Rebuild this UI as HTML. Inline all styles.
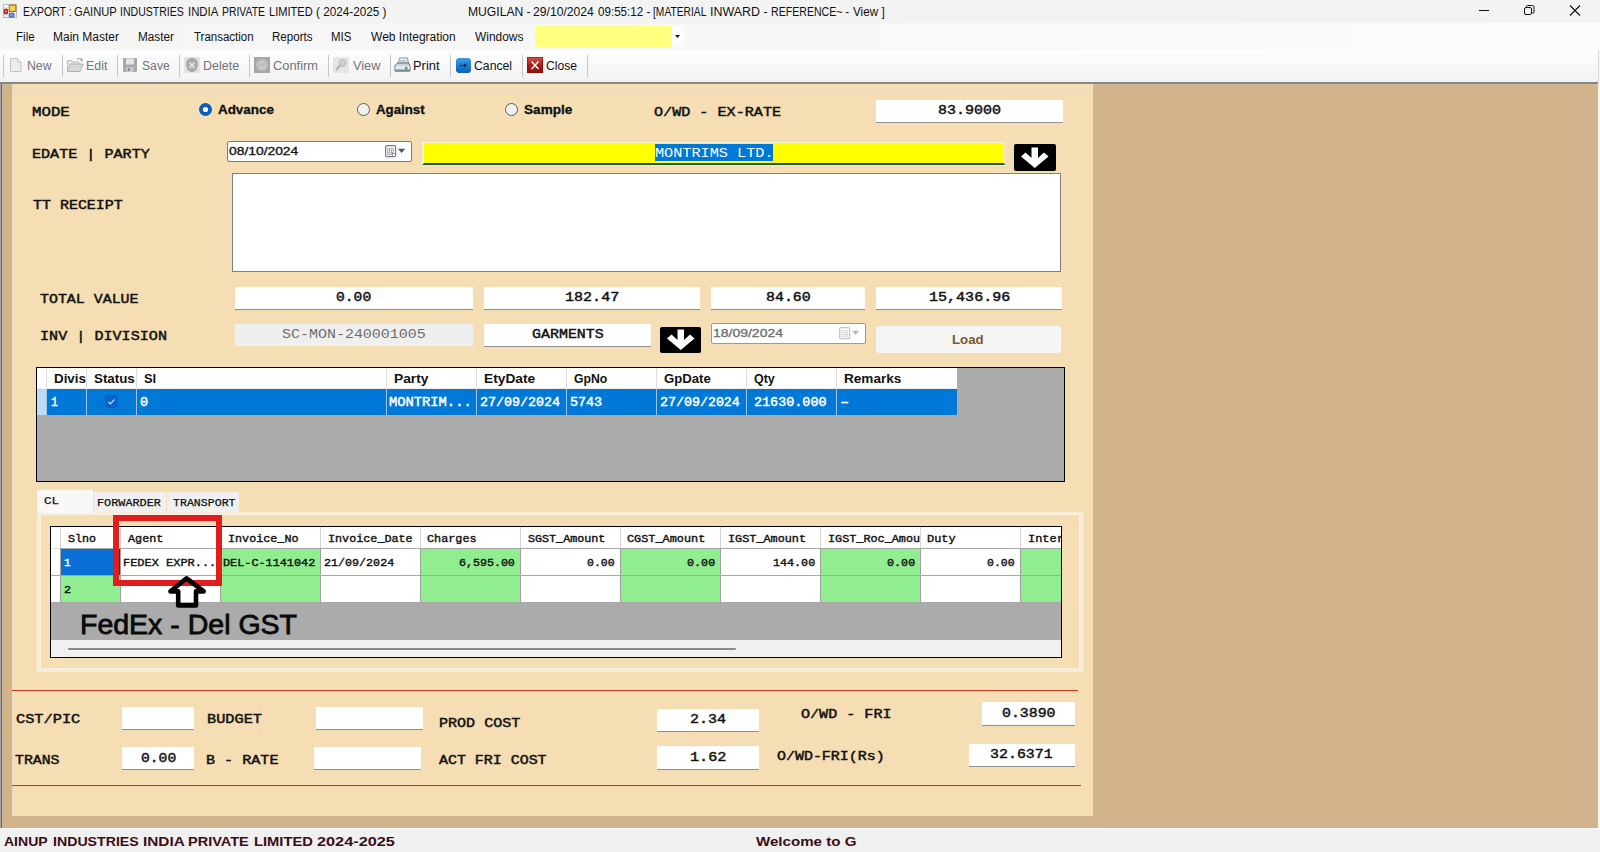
<!DOCTYPE html>
<html>
<head>
<meta charset="utf-8">
<title>EXPORT : GAINUP INDUSTRIES INDIA PRIVATE LIMITED</title>
<style>
*{box-sizing:border-box;margin:0;padding:0}
html,body{width:1600px;height:852px;overflow:hidden;background:#d2b48c;font-family:"Liberation Sans",sans-serif}
#root{position:relative;width:1600px;height:852px;overflow:hidden;background:#d2b48c}
#root div,#root svg,#root span{position:absolute}
.t{white-space:pre;transform-origin:0 0;color:#111;display:block}
.ui{font-family:"Liberation Sans",sans-serif;font-weight:normal;font-size:12.0px}
.uib{font-family:"Liberation Sans",sans-serif;font-weight:bold;font-size:12.0px}
.rad{font-family:"Liberation Sans",sans-serif;font-weight:bold;font-size:12.5px;-webkit-text-stroke:0.3px currentColor}
.date{font-family:"Liberation Sans",sans-serif;font-weight:normal;font-size:10.8px;-webkit-text-stroke:0.3px currentColor}
.gh{font-family:"Liberation Sans",sans-serif;font-weight:bold;font-size:12.0px}
.lbl{font-family:"Liberation Mono",monospace;font-weight:normal;font-size:12.5px;-webkit-text-stroke:0.45px currentColor}
.val{font-family:"Liberation Mono",monospace;font-weight:normal;font-size:13.5px;-webkit-text-stroke:0.45px currentColor}
.valr{font-family:"Liberation Mono",monospace;font-weight:normal;font-size:12.0px}
.g1{font-family:"Liberation Mono",monospace;font-weight:normal;font-size:12.5px;-webkit-text-stroke:0.45px currentColor}
.tab{font-family:"Liberation Mono",monospace;font-weight:normal;font-size:11.5px;-webkit-text-stroke:0.25px currentColor}
.g2{font-family:"Liberation Mono",monospace;font-weight:normal;font-size:11.5px;-webkit-text-stroke:0.4px currentColor}
.big{font-family:"Liberation Sans",sans-serif;font-weight:normal;font-size:27.0px;-webkit-text-stroke:0.8px currentColor}
#title{left:0;top:0;width:1600px;height:23px;background:#f3f3f3}
#menu{left:0;top:23px;width:1600px;height:27px;background:linear-gradient(to right,#f5f5f5,#fbfbfb)}
#tool{left:0;top:50px;width:1599px;height:34px;background:linear-gradient(#fefefe,#f2f2f2);border-bottom:2px solid #868686;border-right:1px solid #dadada;border-radius:0 0 3px 0}
.sep{top:55px;width:1px;height:22px;background:#c6c6c6}
#panel{left:12px;top:84px;width:1081px;height:732px;background:#f5deb3}
.tb{background:#fff;border-bottom:1px solid #909090}
.dp{background:#fff;border:1px solid #85786a;border-radius:2px}
.blk{background:#000;border-radius:2px}
.hr{height:1px;background:#c23b22;box-shadow:0 1px 0 rgba(255,200,170,.6)}
#g1{left:36px;top:367px;width:1029px;height:115px;background:#ababab;border:1px solid #000}
#g2{left:50px;top:526px;width:1012px;height:132px;background:#ababab;border:1px solid #000}
.cell{border-right:1px solid #a0a0a0;border-bottom:1px solid #a0a0a0}
.gr{background:#90ee90}.wh{background:#fff}
#status{left:0;top:828px;width:1600px;height:24px;background:#f0f0f0;border-top:1px solid #f8f8f8}
</style>
</head>
<body>
<div id="root">

<!-- ===== TITLE BAR ===== -->
<div id="title">
  <svg style="left:3px;top:4px" width="14" height="14" viewBox="0 0 14 14">
    <rect x="0.500" y="0.500" width="13" height="13" fill="#fafafa" stroke="#b9b9b9"/>
    <path d="M1 3.800h4.500M4 9.800v3.500M1 10.500h4M12 9v4" stroke="#d9d9d9" stroke-width="0.800"/>
    <rect x="1.200" y="5.200" width="3.500" height="4.500" rx="0.600" fill="#e8574a" stroke="#8e1717"/>
    <rect x="6.300" y="1.200" width="6.500" height="6.200" rx="0.500" fill="#fbd34a" stroke="#a47c1b" stroke-width="1.200"/>
    <rect x="6.200" y="9.200" width="4.800" height="3.800" rx="0.500" fill="#6c9aec" stroke="#3d5aa8"/>
  </svg>
  <svg style="left:1470px;top:0" width="130" height="24" viewBox="0 0 130 24">
    <path d="M9 10.500H19" stroke="#111" stroke-width="1" fill="none"/>
    <rect x="54.500" y="7.500" width="7" height="7" rx="1.500" fill="none" stroke="#111"/>
    <path d="M56.500 7.500V6.500a1 1 0 0 1 1-1h5a1.500 1.500 0 0 1 1.500 1.500v5a1 1 0 0 1-1 1h-1" fill="none" stroke="#111"/>
    <path d="M100 5.500l10 10M110 5.500l-10 10" stroke="#111" stroke-width="1.100" fill="none"/>
  </svg>
</div>

<!-- ===== MENU BAR ===== -->
<div id="menu">
  <div style="left:535px;top:3px;width:136px;height:21px;background:#ffff80"></div>
  <div style="left:671px;top:3px;width:13px;height:21px;background:#fdfdfd"></div>
  <svg style="left:675px;top:12px" width="5" height="3" viewBox="0 0 5 3"><path d="M0 0h5L2.500 3z" fill="#111"/></svg>
</div>

<!-- window edges -->
<div style="left:0;top:82px;width:1px;height:746px;background:#a2a2a6"></div>
<div style="left:1px;top:84px;width:1px;height:744px;background:#716d66"></div>
<div style="left:1598px;top:50px;width:2px;height:778px;background:#f6f6f6"></div>

<!-- ===== TOOLBAR ===== -->
<div id="tool"></div>
<div class="sep" style="left:3px"></div><div class="sep" style="left:62px"></div><div class="sep" style="left:117px"></div>
<div class="sep" style="left:179px"></div><div class="sep" style="left:249px"></div><div class="sep" style="left:328px"></div>
<div class="sep" style="left:390px"></div><div class="sep" style="left:450px"></div><div class="sep" style="left:522px"></div>
<div class="sep" style="left:587px"></div>
<svg style="left:10px;top:58px" width="12" height="14" viewBox="0 0 12 14"><path d="M0.500 0.500h7l3.500 3.500v9.500h-10.500z" fill="#ececec" stroke="#c2c2c2"/><path d="M7.500 0.500v3.500h3.500" fill="#f8f8f8" stroke="#c2c2c2"/></svg>
<svg style="left:67px;top:57px" width="17" height="16" viewBox="0 0 17 16"><path d="M0.500 14.500v-11h4l1.500 1.500h6v2.500" fill="#e6e6e6" stroke="#bdbdbd"/><path d="M0.500 14.500l3-7.500h12.500l-3 7.500z" fill="#d8d8d8" stroke="#b4b4b4"/><path d="M10 2.500c2-2 4.500-1.500 5 1l1-1M15 3.500l-1.800-0.300" fill="none" stroke="#b0b0b0" stroke-width="1.200"/></svg>
<svg style="left:123px;top:58px" width="14" height="14" viewBox="0 0 14 14"><rect x="0" y="0" width="14" height="14" rx="1" fill="#a9a9a9"/><rect x="3" y="0.500" width="8" height="6" fill="#e4e4e4"/><rect x="3.500" y="9" width="7" height="5" fill="#c9c9c9"/><rect x="5" y="10" width="2" height="3" fill="#8f8f8f"/></svg>
<svg style="left:184px;top:57px" width="16" height="16" viewBox="0 0 16 16"><rect width="16" height="16" fill="#e2e2e2"/><path d="M8 1c3.500 0 6 2.500 6 6.500s-2.500 7.500-6 7.500s-6-3.500-6-7.500s2.500-6.500 6-6.500z" fill="#a9a9a9"/><path d="M5.500 5.500l5 5.500M10.500 5.500l-5 5.500" stroke="#ececec" stroke-width="1.300"/></svg>
<svg style="left:254px;top:57px" width="16" height="16" viewBox="0 0 16 16"><rect width="16" height="16" fill="#a6a6a6"/><circle cx="8" cy="8" r="6" fill="#bdbdbd"/><path d="M4.500 8.500a3.500 3.500 0 0 1 6-2.500M11.500 7.500a3.500 3.500 0 0 1-6 2.500" fill="none" stroke="#d2d2d2" stroke-width="1.200"/></svg>
<svg style="left:333px;top:57px" width="16" height="16" viewBox="0 0 16 16"><rect width="16" height="16" fill="#e6e6e6"/><circle cx="9.500" cy="6" r="3.600" fill="#cfcfcf" stroke="#bcbcbc"/><path d="M7 8.500l-3.500 4" stroke="#b6b6b6" stroke-width="2.200" stroke-linecap="round"/></svg>
<svg style="left:394px;top:57px" width="17" height="16" viewBox="0 0 17 16"><path d="M4 6.500l1.500-5.500h8l1 5.500z" fill="#f4f6f8" stroke="#8792a0"/><path d="M6 3.500h6M5.600 5h7" stroke="#a0a8b2" stroke-width="0.800"/><path d="M1 8.500l2.500-2.500h11l1.500 2.500v5.500h-15z" fill="#c9d1da" stroke="#5f6b7a"/><rect x="1.500" y="9" width="14" height="5" fill="#e4e9ee"/><rect x="1" y="12.500" width="15" height="2" fill="#7d8996"/><rect x="11" y="10" width="2.500" height="2.500" fill="#2fb344"/></svg>
<svg style="left:456px;top:58px" width="15" height="15" viewBox="0 0 15 15"><defs><linearGradient id="cg" x1="0" y1="0" x2="0" y2="1"><stop offset="0" stop-color="#3a9be6"/><stop offset="1" stop-color="#0b5fb4"/></linearGradient></defs><path d="M2 0h11l2 2v11l-2 2h-11l-2-2v-11z" fill="url(#cg)"/><path d="M4 7.500h1M6 7.500h1.500" stroke="#0a2a55" stroke-width="1.600"/><path d="M8 5.500l3 2l-3 2z" fill="#0a2a55"/></svg>
<svg style="left:527px;top:57px" width="16" height="16" viewBox="0 0 16 16"><defs><linearGradient id="rg" x1="0" y1="0" x2="0" y2="1"><stop offset="0" stop-color="#d9534f"/><stop offset="0.500" stop-color="#b01c1c"/><stop offset="1" stop-color="#8e1010"/></linearGradient></defs><rect width="16" height="16" fill="url(#rg)"/><rect x="0.500" y="0.500" width="15" height="15" fill="none" stroke="#7a0d0d" stroke-opacity=".6"/><path d="M4.500 4.500l7 7.500M11.500 4.500l-7 7.500" stroke="#fff" stroke-width="1.500"/></svg>

<!-- ===== MAIN PANEL ===== -->
<div id="panel"></div>
<div style="left:12px;top:90px;width:1081px;height:1px;background:#eddcbd"></div>
<div style="left:12px;top:84px;width:1px;height:732px;background:#eddcc0"></div>

<!-- radios -->
<svg style="left:198px;top:102px" width="15" height="15" viewBox="0 0 15 15"><circle cx="7.500" cy="7.500" r="6.500" fill="#0a5fb8"/><circle cx="7.500" cy="7.500" r="2.600" fill="#fff"/></svg>
<svg style="left:356px;top:102px" width="15" height="15" viewBox="0 0 15 15"><circle cx="7.500" cy="7.500" r="6" fill="#f1f1f1" stroke="#5c5c5c"/></svg>
<svg style="left:504px;top:102px" width="15" height="15" viewBox="0 0 15 15"><circle cx="7.500" cy="7.500" r="6" fill="#f1f1f1" stroke="#5c5c5c"/></svg>

<!-- ex-rate -->
<div class="tb" style="left:876px;top:100px;width:187px;height:23px"></div>

<!-- date picker 1 -->
<div class="dp" style="left:227px;top:141px;width:185px;height:21px"></div>
<svg style="left:385px;top:145px" width="22" height="13" viewBox="0 0 22 13">
  <rect x="0.600" y="0.600" width="10" height="11" rx="1.300" fill="#fff" stroke="#7b7b7b" stroke-width="1.200"/>
  <rect x="2.100" y="3.100" width="6.800" height="6.800" fill="#a6aabd"/>
  <path d="M2.900 4.600h1.200M4.900 4.600h1.200M6.900 4.600h1.200M2.900 6.500h1.200M4.900 6.500h1.200M6.900 6.500h1.200M2.900 8.400h1.200M4.900 8.400h1.200" stroke="#fff" stroke-width="1.100"/>
  <path d="M7.500 11.200v-2.700h2.700" fill="#fff" stroke="#8a8a8a" stroke-width="0.800"/>
  <path d="M13 3.800h7.200l-3.600 4.300z" fill="#4a5570"/>
</svg>

<!-- party (yellow) -->
<div style="left:422px;top:142px;width:583px;height:23px;background:#ffff00;border:1px solid #f8f3cc;border-left:2px solid #faf6dc;border-bottom:2px solid #1f5648"></div>
<div style="left:422px;top:165px;width:583px;height:1px;background:#e6eedd"></div>
<div style="left:655px;top:144px;width:118px;height:17px;background:#0078d7"></div>
<div class="blk" style="left:1014px;top:144px;width:42px;height:27px"></div>
<svg style="left:1014px;top:144px" width="42" height="27" viewBox="0 0 42 27"><path d="M17.500 3.500h6.500v10.500l6-5.500l4.500 4l-13.750 11.500l-13.750-11.500l4.500-4l6 5.500z" fill="#fff"/></svg>

<!-- TT receipt -->
<div style="left:232px;top:173px;width:829px;height:99px;background:#fff;border:1px solid #7f7f7f"></div>

<!-- total value boxes -->
<div class="tb" style="left:235px;top:287px;width:238px;height:23px"></div>
<div class="tb" style="left:484px;top:287px;width:216px;height:23px"></div>
<div class="tb" style="left:711px;top:287px;width:154px;height:23px"></div>
<div class="tb" style="left:876px;top:287px;width:186px;height:23px"></div>

<!-- inv | division -->
<div style="left:235px;top:324px;width:238px;height:22px;background:#efefef;border-radius:1px"></div>
<div class="tb" style="left:484px;top:324px;width:167px;height:23px"></div>
<div class="blk" style="left:660px;top:327px;width:41px;height:26px"></div>
<svg style="left:660px;top:326px" width="42" height="27" viewBox="0 0 42 27"><path d="M17.500 3.500h6.500v10.500l6-5.500l4.500 4l-13.750 11.500l-13.750-11.500l4.500-4l6 5.500z" fill="#fff"/></svg>
<div class="dp" style="left:711px;top:323px;width:155px;height:21px;border-color:#9a9a9a"></div>
<svg style="left:839px;top:327px" width="22" height="13" viewBox="0 0 22 13">
  <rect x="0.600" y="0.600" width="10" height="11" rx="1.300" fill="#fbfbfb" stroke="#c6c6c6" stroke-width="1.200"/>
  <rect x="2.100" y="3.100" width="6.800" height="6.800" fill="#dcdde4"/>
  <path d="M2.900 4.600h1.200M4.900 4.600h1.200M6.900 4.600h1.200M2.900 6.500h1.200M4.900 6.500h1.200M6.900 6.500h1.200M2.900 8.400h1.200M4.900 8.400h1.200" stroke="#fff" stroke-width="1.100"/>
  <path d="M13 3.800h7.200l-3.600 4.300z" fill="#b9b9b9"/>
</svg>
<div style="left:876px;top:326px;width:185px;height:27px;background:#f5f5f5;border-radius:3px"></div>

<!-- ===== GRID 1 ===== -->
<div id="g1">
  <div style="left:0;top:0;width:920px;height:21px;background:#fff"></div>
  <div style="left:0;top:21px;width:920px;height:26px;background:#0078d7"></div>
  <div style="left:0;top:21px;width:9px;height:26px;background:#bcdcf4"></div>
  <!-- column separators -->
  <div style="left:9px;top:0;width:1px;height:21px;background:#dedede"></div><div style="left:9px;top:21px;width:1px;height:26px;background:#9fc5ec"></div>
  <div style="left:49px;top:0;width:1px;height:21px;background:#dedede"></div><div style="left:49px;top:21px;width:1px;height:26px;background:#9fc5ec"></div>
  <div style="left:99px;top:0;width:1px;height:21px;background:#dedede"></div><div style="left:99px;top:21px;width:1px;height:26px;background:#9fc5ec"></div>
  <div style="left:349px;top:0;width:1px;height:21px;background:#dedede"></div><div style="left:349px;top:21px;width:1px;height:26px;background:#9fc5ec"></div>
  <div style="left:439px;top:0;width:1px;height:21px;background:#dedede"></div><div style="left:439px;top:21px;width:1px;height:26px;background:#9fc5ec"></div>
  <div style="left:529px;top:0;width:1px;height:21px;background:#dedede"></div><div style="left:529px;top:21px;width:1px;height:26px;background:#9fc5ec"></div>
  <div style="left:619px;top:0;width:1px;height:21px;background:#dedede"></div><div style="left:619px;top:21px;width:1px;height:26px;background:#9fc5ec"></div>
  <div style="left:709px;top:0;width:1px;height:21px;background:#dedede"></div><div style="left:709px;top:21px;width:1px;height:26px;background:#9fc5ec"></div>
  <div style="left:799px;top:0;width:1px;height:21px;background:#dedede"></div><div style="left:799px;top:21px;width:1px;height:26px;background:#9fc5ec"></div>
  <div style="left:0;top:20px;width:920px;height:1px;background:#ececec"></div>
  <!-- checkbox -->
  <div style="left:68px;top:27px;width:13px;height:13px;background:#0b63c9;border-radius:3px"></div>
  <svg style="left:68px;top:27px" width="13" height="13" viewBox="0 0 13 13"><path d="M3.500 6.800l2 2l4-4.300" fill="none" stroke="#fff" stroke-width="1.100"/></svg>
</div>

<!-- ===== TABS ===== -->
<div style="left:37px;top:512px;width:1046px;height:160px;border:3px solid #f6ecd8;border-top-width:2px;background:#f5deb3;box-shadow:inset 0 0 0 1px #f9f3e6"></div>
<div style="left:37px;top:490px;width:56px;height:23px;background:#f9f8f6"></div>
<div style="left:94px;top:492px;width:72px;height:20px;background:#f0f0f0"></div>
<div style="left:167px;top:492px;width:72px;height:20px;background:#f0f0f0"></div>

<!-- ===== GRID 2 ===== -->
<div id="g2">
  <div style="left:0;top:0;width:1010px;height:76px;background:#fff"></div>
  <div style="left:10px;top:22px;width:59px;height:26px;background:#0a6fd6"></div>
  <div style="left:170px;top:22px;width:99px;height:26px;background:#90ee90"></div>
  <div style="left:370px;top:22px;width:99px;height:26px;background:#90ee90"></div>
  <div style="left:570px;top:22px;width:99px;height:26px;background:#90ee90"></div>
  <div style="left:770px;top:22px;width:99px;height:26px;background:#90ee90"></div>
  <div style="left:970px;top:22px;width:40px;height:26px;background:#90ee90"></div>
  <div style="left:10px;top:49px;width:59px;height:26px;background:#90ee90"></div>
  <div style="left:170px;top:49px;width:99px;height:26px;background:#90ee90"></div>
  <div style="left:370px;top:49px;width:99px;height:26px;background:#90ee90"></div>
  <div style="left:570px;top:49px;width:99px;height:26px;background:#90ee90"></div>
  <div style="left:770px;top:49px;width:99px;height:26px;background:#90ee90"></div>
  <div style="left:970px;top:49px;width:40px;height:26px;background:#90ee90"></div>
  <div style="left:9px;top:0;width:1px;height:21px;background:#d4d4d4"></div>
  <div style="left:9px;top:21px;width:1px;height:55px;background:#a0a0a0"></div>
  <div style="left:69px;top:0;width:1px;height:21px;background:#d4d4d4"></div>
  <div style="left:69px;top:21px;width:1px;height:55px;background:#a0a0a0"></div>
  <div style="left:169px;top:0;width:1px;height:21px;background:#d4d4d4"></div>
  <div style="left:169px;top:21px;width:1px;height:55px;background:#a0a0a0"></div>
  <div style="left:269px;top:0;width:1px;height:21px;background:#d4d4d4"></div>
  <div style="left:269px;top:21px;width:1px;height:55px;background:#a0a0a0"></div>
  <div style="left:369px;top:0;width:1px;height:21px;background:#d4d4d4"></div>
  <div style="left:369px;top:21px;width:1px;height:55px;background:#a0a0a0"></div>
  <div style="left:469px;top:0;width:1px;height:21px;background:#d4d4d4"></div>
  <div style="left:469px;top:21px;width:1px;height:55px;background:#a0a0a0"></div>
  <div style="left:569px;top:0;width:1px;height:21px;background:#d4d4d4"></div>
  <div style="left:569px;top:21px;width:1px;height:55px;background:#a0a0a0"></div>
  <div style="left:669px;top:0;width:1px;height:21px;background:#d4d4d4"></div>
  <div style="left:669px;top:21px;width:1px;height:55px;background:#a0a0a0"></div>
  <div style="left:769px;top:0;width:1px;height:21px;background:#d4d4d4"></div>
  <div style="left:769px;top:21px;width:1px;height:55px;background:#a0a0a0"></div>
  <div style="left:869px;top:0;width:1px;height:21px;background:#d4d4d4"></div>
  <div style="left:869px;top:21px;width:1px;height:55px;background:#a0a0a0"></div>
  <div style="left:969px;top:0;width:1px;height:21px;background:#d4d4d4"></div>
  <div style="left:969px;top:21px;width:1px;height:55px;background:#a0a0a0"></div>
  <div style="left:67px;top:22px;width:2px;height:26px;background:#1b2f7a"></div>
  <div style="left:0;top:21px;width:1010px;height:1px;background:#a6a6a6"></div>
  <div style="left:0;top:48px;width:1010px;height:1px;background:#a6a6a6"></div>
  <div style="left:0;top:75px;width:1010px;height:1px;background:#a6a6a6"></div>
  <div style="left:0;top:21px;width:9px;height:1px;background:#e0e0e0"></div>
  <div style="left:0;top:113px;width:1010px;height:17px;background:#f0f0f0"></div>
  <div style="left:17px;top:121px;width:668px;height:2px;background:#8a8a8a;border-radius:1px"></div>
</div>

<!-- ===== bottom section ===== -->
<div class="hr" style="left:12px;top:690px;width:1066px"></div>
<div class="hr" style="left:12px;top:785px;width:1069px"></div>
<div class="tb" style="left:122px;top:707px;width:72px;height:23px"></div>
<div class="tb" style="left:316px;top:707px;width:107px;height:23px"></div>
<div class="tb" style="left:122px;top:747px;width:72px;height:23px"></div>
<div class="tb" style="left:314px;top:747px;width:107px;height:23px"></div>
<div class="tb" style="left:657px;top:709px;width:102px;height:23px"></div>
<div class="tb" style="left:657px;top:746px;width:102px;height:24px"></div>
<div class="tb" style="left:982px;top:702px;width:93px;height:24px"></div>
<div class="tb" style="left:969px;top:744px;width:106px;height:23px"></div>

<!-- ===== STATUS BAR ===== -->
<div id="status"></div>

<!-- ===== TEXT LAYER ===== -->
<span class="t ui" style="left:22.93px;top:4.15px;line-height:16px;transform:scaleX(0.8741)">EXPORT :</span>
<span class="t ui" style="left:73.98px;top:4.15px;line-height:16px;transform:scaleX(0.9290)">GAINUP</span>
<span class="t ui" style="left:120.43px;top:4.15px;line-height:16px;transform:scaleX(0.8774)">INDUSTRIES</span>
<span class="t ui" style="left:187.86px;top:4.15px;line-height:16px;transform:scaleX(0.9478)">INDIA</span>
<span class="t ui" style="left:222.44px;top:4.15px;line-height:16px;transform:scaleX(0.8676)">PRIVATE</span>
<span class="t ui" style="left:269.13px;top:4.15px;line-height:16px;transform:scaleX(0.9242)">LIMITED</span>
<span class="t ui" style="left:316.45px;top:4.15px;line-height:16px;transform:scaleX(0.9772)">( 2024-2025 )</span>
<span class="t ui" style="left:467.80px;top:4.15px;line-height:16px;transform:scaleX(1.0102)">MUGILAN -</span>
<span class="t ui" style="left:533.18px;top:4.15px;line-height:16px;transform:scaleX(1.0136)">29/10/2024</span>
<span class="t ui" style="left:597.64px;top:4.15px;line-height:16px;transform:scaleX(0.9675)">09:55:12 -</span>
<span class="t ui" style="left:653.11px;top:4.15px;line-height:16px;transform:scaleX(0.8550)">[MATERIAL</span>
<span class="t ui" style="left:710.28px;top:4.15px;line-height:16px;transform:scaleX(1.0383)">INWARD -</span>
<span class="t ui" style="left:770.92px;top:4.15px;line-height:16px;transform:scaleX(0.8824)">REFERENCE~ -</span>
<span class="t ui" style="left:852.50px;top:4.15px;line-height:16px;transform:scaleX(0.9763)">View ]</span>
<span class="t ui" style="left:15.60px;top:29.14px;line-height:16px;transform:scaleX(0.9630)">File</span>
<span class="t ui" style="left:52.81px;top:29.14px;line-height:16px;transform:scaleX(0.9997)">Main Master</span>
<span class="t ui" style="left:137.83px;top:29.14px;line-height:16px;transform:scaleX(0.9810)">Master</span>
<span class="t ui" style="left:193.57px;top:29.14px;line-height:16px;transform:scaleX(0.9570)">Transaction</span>
<span class="t ui" style="left:271.60px;top:29.14px;line-height:16px;transform:scaleX(0.9643)">Reports</span>
<span class="t ui" style="left:330.85px;top:29.14px;line-height:16px;transform:scaleX(0.9551)">MIS</span>
<span class="t ui" style="left:370.50px;top:29.14px;line-height:16px;transform:scaleX(1.0021)">Web Integration</span>
<span class="t ui" style="left:474.50px;top:29.14px;line-height:16px;transform:scaleX(0.9937)">Windows</span>
<span class="t ui" style="left:26.79px;top:58.14px;line-height:16px;transform:scaleX(1.0231);color:#73737a">New</span>
<span class="t ui" style="left:85.63px;top:58.14px;line-height:16px;transform:scaleX(1.0313);color:#73737a">Edit</span>
<span class="t ui" style="left:141.52px;top:58.14px;line-height:16px;transform:scaleX(1.0136);color:#73737a">Save</span>
<span class="t ui" style="left:202.77px;top:58.14px;line-height:16px;transform:scaleX(1.0447);color:#73737a">Delete</span>
<span class="t ui" style="left:273.15px;top:58.14px;line-height:16px;transform:scaleX(1.0717);color:#73737a">Confirm</span>
<span class="t ui" style="left:352.50px;top:58.14px;line-height:16px;transform:scaleX(1.0602);color:#73737a">View</span>
<span class="t ui" style="left:413.39px;top:58.14px;line-height:16px;transform:scaleX(1.0767)">Print</span>
<span class="t ui" style="left:474.33px;top:58.14px;line-height:16px;transform:scaleX(1.0194)">Cancel</span>
<span class="t ui" style="left:546.13px;top:58.14px;line-height:16px;transform:scaleX(1.0125)">Close</span>
<span class="t lbl" style="left:31.52px;top:104.97px;line-height:16px;transform:scaleX(1.2607)">MODE</span>
<span class="t lbl" style="left:31.82px;top:146.97px;line-height:16px;transform:scaleX(1.2078)">EDATE | PARTY</span>
<span class="t lbl" style="left:33.28px;top:197.97px;line-height:16px;transform:scaleX(1.1969)">TT RECEIPT</span>
<span class="t lbl" style="left:654.29px;top:105.47px;line-height:16px;transform:scaleX(1.2096)">O/WD - EX-RATE</span>
<span class="t lbl" style="left:40.28px;top:292.22px;line-height:16px;transform:scaleX(1.1941)">TOTAL VALUE</span>
<span class="t lbl" style="left:39.83px;top:329.22px;line-height:16px;transform:scaleX(1.2089)">INV | DIVISION</span>
<span class="t lbl" style="left:16.28px;top:711.97px;line-height:16px;transform:scaleX(1.2244)">CST/PIC</span>
<span class="t lbl" style="left:206.81px;top:711.97px;line-height:16px;transform:scaleX(1.2224)">BUDGET</span>
<span class="t lbl" style="left:15.29px;top:753.22px;line-height:16px;transform:scaleX(1.1870)">TRANS</span>
<span class="t lbl" style="left:206.32px;top:752.97px;line-height:16px;transform:scaleX(1.2081)">B - RATE</span>
<span class="t lbl" style="left:438.82px;top:715.97px;line-height:16px;transform:scaleX(1.2034)">PROD COST</span>
<span class="t lbl" style="left:439.25px;top:753.22px;line-height:16px;transform:scaleX(1.1949)">ACT FRI COST</span>
<span class="t lbl" style="left:801.29px;top:707.22px;line-height:16px;transform:scaleX(1.2062)">O/WD - FRI</span>
<span class="t lbl" style="left:777.30px;top:748.97px;line-height:16px;transform:scaleX(1.1957)">O/WD-FRI(Rs)</span>
<span class="t val" style="left:937.81px;top:101.71px;line-height:18px;transform:scaleX(1.1107)">83.9000</span>
<span class="t val" style="left:336.31px;top:288.96px;line-height:18px;transform:scaleX(1.0868)">0.00</span>
<span class="t val" style="left:564.81px;top:288.96px;line-height:18px;transform:scaleX(1.1156)">182.47</span>
<span class="t val" style="left:766.07px;top:288.96px;line-height:18px;transform:scaleX(1.1041)">84.60</span>
<span class="t val" style="left:929.06px;top:288.96px;line-height:18px;transform:scaleX(1.1142)">15,436.96</span>
<span class="t val" style="left:531.80px;top:325.71px;line-height:18px;transform:scaleX(1.1073)">GARMENTS</span>
<span class="t val" style="left:689.56px;top:710.96px;line-height:18px;transform:scaleX(1.1110)">2.34</span>
<span class="t val" style="left:689.55px;top:748.96px;line-height:18px;transform:scaleX(1.1263)">1.62</span>
<span class="t val" style="left:140.56px;top:749.71px;line-height:18px;transform:scaleX(1.0868)">0.00</span>
<span class="t val" style="left:1002.30px;top:704.71px;line-height:18px;transform:scaleX(1.1004)">0.3890</span>
<span class="t val" style="left:989.82px;top:745.96px;line-height:18px;transform:scaleX(1.1064)">32.6371</span>
<span class="t valr" style="left:282.03px;top:327.11px;line-height:16px;transform:scaleX(1.2478);color:#6d6d6d">SC-MON-240001005</span>
<span class="t valr" style="left:655.05px;top:145.61px;line-height:16px;transform:scaleX(1.2670);color:#ffffff">MONTRIMS LTD.</span>
<span class="t rad" style="left:218.19px;top:101.77px;line-height:16px;transform:scaleX(1.0727)">Advance</span>
<span class="t rad" style="left:376.39px;top:101.77px;line-height:16px;transform:scaleX(1.0618)">Against</span>
<span class="t rad" style="left:523.99px;top:101.77px;line-height:16px;transform:scaleX(1.0874)">Sample</span>
<span class="t date" style="left:229.07px;top:143.56px;line-height:14px;transform:scaleX(1.2817)">08/10/2024</span>
<span class="t date" style="left:712.88px;top:325.56px;line-height:14px;transform:scaleX(1.2945);color:#6e6e6e">18/09/2024</span>
<span class="t uib" style="left:951.67px;top:332.40px;line-height:16px;transform:scaleX(1.1051);color:#7b5a2b">Load</span>
<span class="t gh" style="left:53.67px;top:371.15px;line-height:16px;transform:scaleX(1.1113)">Divis</span>
<span class="t gh" style="left:94.29px;top:371.15px;line-height:16px;transform:scaleX(1.1111)">Status</span>
<span class="t gh" style="left:144.05px;top:371.15px;line-height:16px;transform:scaleX(1.0774)">Sl</span>
<span class="t gh" style="left:393.64px;top:371.15px;line-height:16px;transform:scaleX(1.1485)">Party</span>
<span class="t gh" style="left:483.64px;top:371.15px;line-height:16px;transform:scaleX(1.1459)">EtyDate</span>
<span class="t gh" style="left:574.12px;top:371.15px;line-height:16px;transform:scaleX(1.0190)">GpNo</span>
<span class="t gh" style="left:664.09px;top:371.15px;line-height:16px;transform:scaleX(1.0952)">GpDate</span>
<span class="t gh" style="left:754.11px;top:371.15px;line-height:16px;transform:scaleX(1.0403)">Qty</span>
<span class="t gh" style="left:843.65px;top:371.15px;line-height:16px;transform:scaleX(1.1321)">Remarks</span>
<span class="t g1" style="left:50.53px;top:395.22px;line-height:16px;transform:scaleX(0.9200);color:#ffffff">1</span>
<span class="t g1" style="left:140.12px;top:395.22px;line-height:16px;transform:scaleX(1.0800);color:#ffffff">0</span>
<span class="t g1" style="left:388.64px;top:395.22px;line-height:16px;transform:scaleX(1.1022);color:#ffffff">MONTRIM...</span>
<span class="t g1" style="left:479.67px;top:395.22px;line-height:16px;transform:scaleX(1.0676);color:#ffffff">27/09/2024</span>
<span class="t g1" style="left:569.92px;top:395.22px;line-height:16px;transform:scaleX(1.0680);color:#ffffff">5743</span>
<span class="t g1" style="left:659.92px;top:395.22px;line-height:16px;transform:scaleX(1.0642);color:#ffffff">27/09/2024</span>
<span class="t g1" style="left:753.66px;top:395.22px;line-height:16px;transform:scaleX(1.0747);color:#ffffff">21630.000</span>
<span class="t g1" style="left:837.78px;top:395.22px;line-height:16px;transform:scaleX(1.7778);color:#ffffff">-</span>
<span class="t tab" style="left:43.66px;top:493.14px;line-height:15px;transform:scaleX(1.0869)">CL</span>
<span class="t tab" style="left:97.14px;top:495.04px;line-height:15px;transform:scaleX(1.0283)">FORWARDER</span>
<span class="t tab" style="left:173.39px;top:495.04px;line-height:15px;transform:scaleX(1.0070)">TRANSPORT</span>
<span class="t g2" style="left:68.39px;top:531.04px;line-height:15px;transform:scaleX(1.0138)">Slno</span>
<span class="t g2" style="left:128.25px;top:531.04px;line-height:15px;transform:scaleX(1.0268)">Agent</span>
<span class="t g2" style="left:227.65px;top:531.04px;line-height:15px;transform:scaleX(1.0212)">Invoice_No</span>
<span class="t g2" style="left:327.65px;top:531.04px;line-height:15px;transform:scaleX(1.0225)">Invoice_Date</span>
<span class="t g2" style="left:427.45px;top:531.04px;line-height:15px;transform:scaleX(1.0271)">Charges</span>
<span class="t g2" style="left:528.38px;top:531.04px;line-height:15px;transform:scaleX(1.0181)">SGST_Amount</span>
<span class="t g2" style="left:627.44px;top:531.04px;line-height:15px;transform:scaleX(1.0307)">CGST_Amount</span>
<span class="t g2" style="left:727.64px;top:531.04px;line-height:15px;transform:scaleX(1.0281)">IGST_Amount</span>
<span class="t g2" style="left:827.64px;top:531.04px;line-height:15px;transform:scaleX(1.0266)">IGST_Roc_Amou</span>
<span class="t g2" style="left:927.07px;top:531.04px;line-height:15px;transform:scaleX(1.0396)">Duty</span>
<span class="t g2" style="left:1027.63px;top:531.04px;line-height:15px;transform:scaleX(1.0399)">Inter</span>
<span class="t g2" style="left:63.81px;top:555.14px;line-height:15px;transform:scaleX(0.9565);color:#ffffff">1</span>
<span class="t g2" style="left:123.38px;top:555.14px;line-height:15px;transform:scaleX(1.0394)">FEDEX EXPR...</span>
<span class="t g2" style="left:222.83px;top:555.14px;line-height:15px;transform:scaleX(1.0281)">DEL-C-1141042</span>
<span class="t g2" style="left:323.52px;top:555.14px;line-height:15px;transform:scaleX(1.0168)">21/09/2024</span>
<span class="t g2" style="left:459.27px;top:555.14px;line-height:15px;transform:scaleX(1.0115)">6,595.00</span>
<span class="t g2" style="left:587.46px;top:555.14px;line-height:15px;transform:scaleX(1.0018)">0.00</span>
<span class="t g2" style="left:686.95px;top:555.14px;line-height:15px;transform:scaleX(1.0207)">0.00</span>
<span class="t g2" style="left:772.97px;top:555.14px;line-height:15px;transform:scaleX(1.0181)">144.00</span>
<span class="t g2" style="left:886.95px;top:555.14px;line-height:15px;transform:scaleX(1.0207)">0.00</span>
<span class="t g2" style="left:987.46px;top:555.14px;line-height:15px;transform:scaleX(1.0018)">0.00</span>
<span class="t g2" style="left:63.77px;top:582.14px;line-height:15px;transform:scaleX(1.0203)">2</span>
<span class="t big" style="left:79.77px;top:607.70px;line-height:35px;transform:scaleX(1.0556);color:#0a0a0a">FedEx - Del GST</span>
<span class="t uib" style="left:4.28px;top:833.89px;line-height:16px;transform:scaleX(1.1675);color:#3a0d14">AINUP</span>
<span class="t uib" style="left:52.86px;top:833.89px;line-height:16px;transform:scaleX(1.1800);color:#3a0d14">INDUSTRIES</span>
<span class="t uib" style="left:142.79px;top:833.89px;line-height:16px;transform:scaleX(1.2781);color:#3a0d14">INDIA</span>
<span class="t uib" style="left:188.34px;top:833.89px;line-height:16px;transform:scaleX(1.2103);color:#3a0d14">PRIVATE</span>
<span class="t uib" style="left:253.58px;top:833.89px;line-height:16px;transform:scaleX(1.2279);color:#3a0d14">LIMITED</span>
<span class="t uib" style="left:317.49px;top:833.89px;line-height:16px;transform:scaleX(1.3577);color:#3a0d14">2024-2025</span>
<span class="t uib" style="left:756.25px;top:833.89px;line-height:16px;transform:scaleX(1.2582);color:#3a0d14">Welcome to G</span>

<!-- ===== OVERLAYS ===== -->
<div style="left:1062px;top:527px;width:17px;height:30px;background:#f5deb3"></div>
<div style="left:1061px;top:526px;width:1px;height:132px;background:#000"></div>
<!-- red annotation -->
<div style="left:113px;top:515px;width:109px;height:71px;border:6px solid #e21d1d;border-left-width:6.500px"></div>
<svg style="left:164px;top:572px" width="46" height="40" viewBox="0 0 46 40">
  <path d="M22.600 6.300L39.700 19.400H32V33.400H14.200V19.400H6.500Z" fill="none" stroke="#000" stroke-width="4.600" stroke-linejoin="round"/>
</svg>

</div>
</body>
</html>
